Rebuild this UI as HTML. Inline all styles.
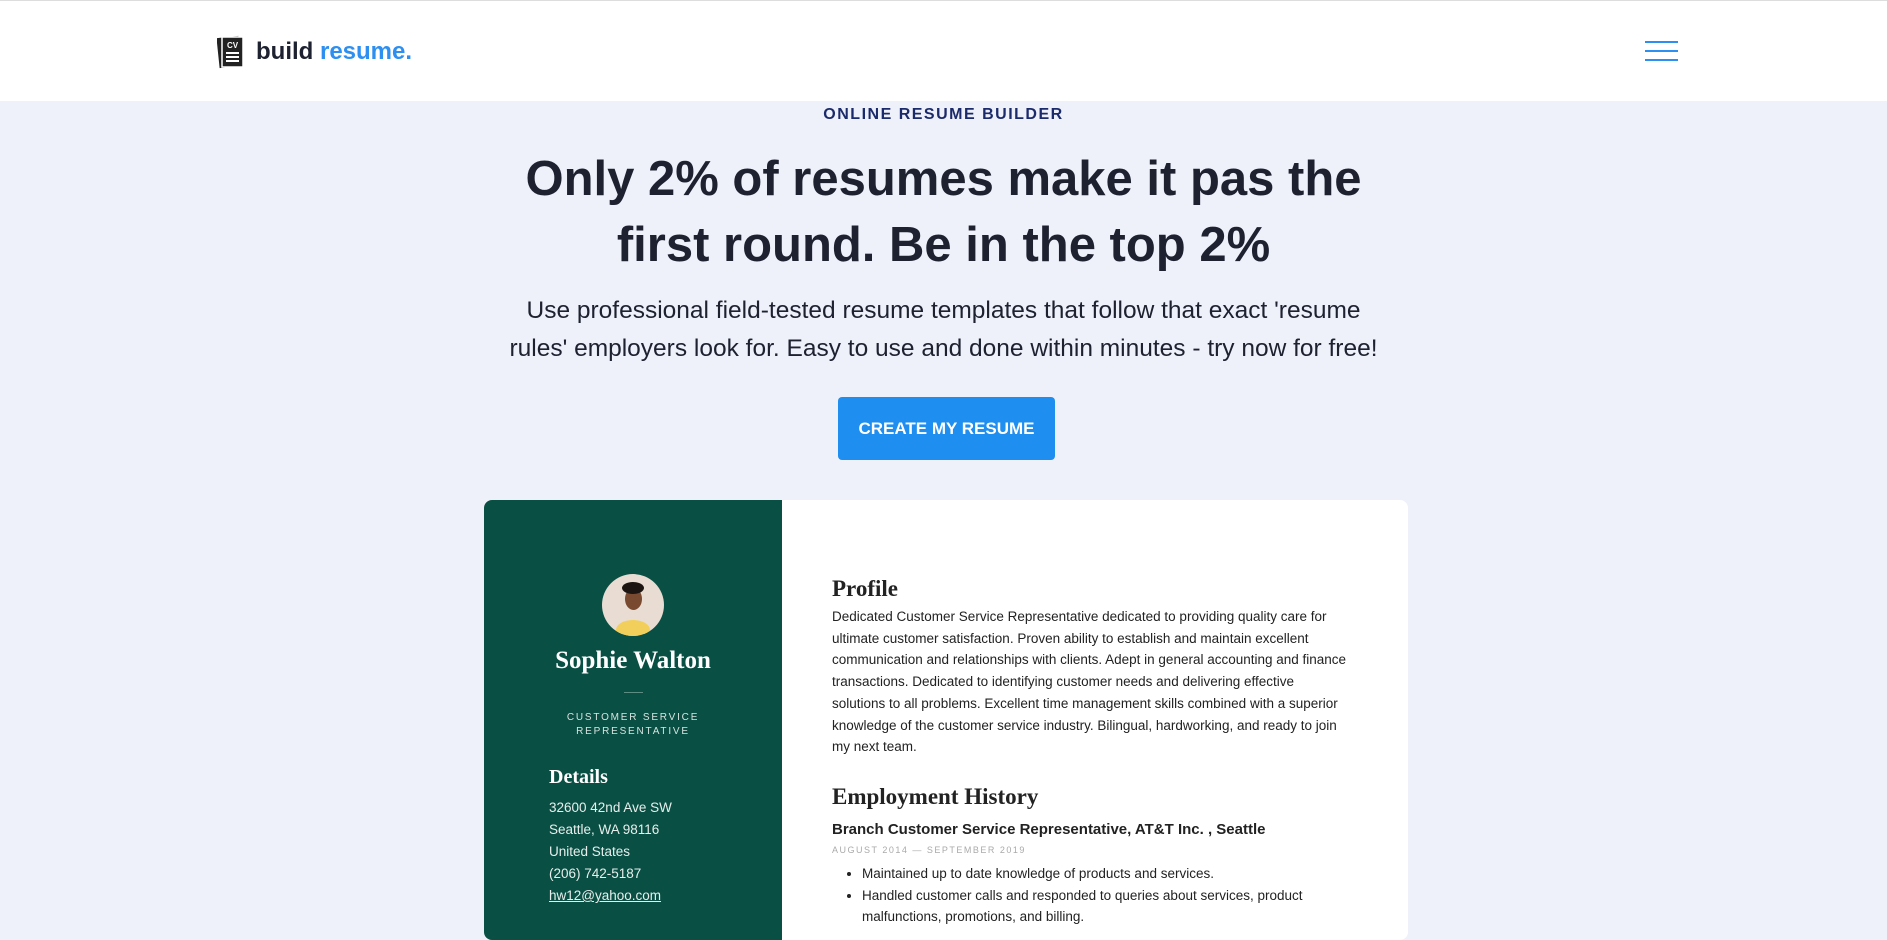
<!DOCTYPE html>
<html><head><meta charset="utf-8"><style>
*{margin:0;padding:0;box-sizing:border-box}
body{width:1887px;height:921px;overflow:hidden;background:#eef1f9;font-family:"Liberation Sans",sans-serif;position:relative}
.hdr{position:absolute;left:0;top:0;width:1887px;height:101px;background:#fff;border-top:1px solid #ddd}
.abs{position:absolute}
.c{position:absolute;left:0;width:1887px;text-align:center}
.serif{font-family:"Liberation Serif",serif}
</style></head><body>
<div class="hdr">
 <svg class="abs" style="left:217px;top:34px" width="28" height="34" viewBox="0 0 28 34">
  <rect x="1" y="2" width="22" height="30" fill="#222" transform="rotate(-6 12 17)"/>
  <rect x="5" y="2" width="21" height="30" fill="#222" stroke="#fff" stroke-width="1.5"/>
  <text x="15.5" y="13" font-size="8" font-family="Liberation Sans" font-weight="bold" fill="#fff" text-anchor="middle">CV</text>
  <rect x="9" y="17" width="13" height="2" fill="#fff"/><rect x="9" y="21" width="13" height="2" fill="#fff"/><rect x="9" y="25" width="13" height="2" fill="#fff"/>
 </svg>
 <div class="abs" style="left:256px;top:37px;font-size:24px;font-weight:bold;color:#1d2130">build <span style="color:#2d8ff0">resume.</span></div>
 <div class="abs" style="left:1645px;top:40px;width:33px;height:2px;background:#2d8ff0"></div>
 <div class="abs" style="left:1645px;top:49px;width:33px;height:2px;background:#2d8ff0"></div>
 <div class="abs" style="left:1645px;top:58px;width:33px;height:2px;background:#2d8ff0"></div>
</div>
<div class="c" style="top:106px;font-size:16px;font-weight:bold;letter-spacing:1.5px;color:#1b2a6b">ONLINE RESUME BUILDER</div>
<div class="c" style="top:146px;font-size:49px;font-weight:bold;line-height:66px;color:#1d2130">Only 2% of resumes make it pas the<br>first round. Be in the top 2%</div>
<div class="c" style="top:292px;font-size:24.5px;line-height:38px;color:#1d2130">Use professional field-tested resume templates that follow that exact 'resume<br>rules' employers look for. Easy to use and done within minutes - try now for free!</div>
<div class="abs" style="left:838px;top:397px;width:217px;height:63px;background:#1f8ef1;border-radius:4px;color:#fff;font-weight:bold;font-size:17px;text-align:center;line-height:63px">CREATE MY RESUME</div>
<div class="abs" style="left:484px;top:500px;width:924px;height:440px;background:#fff;border-radius:8px;overflow:hidden">
 <div class="abs" style="left:0;top:0;width:298px;height:440px;background:#0a4f44;color:#fff">
  <div class="abs" style="left:118px;top:74px;width:62px;height:62px;border-radius:50%;background:#e9dcd3;overflow:hidden">
   <div class="abs" style="left:14px;top:46px;width:34px;height:20px;border-radius:50% 50% 0 0;background:#f2cf5a"></div>
   <div class="abs" style="left:23px;top:14px;width:17px;height:22px;border-radius:50%;background:#7a4a30"></div>
   <div class="abs" style="left:20px;top:8px;width:22px;height:12px;border-radius:50%;background:#1b1410"></div>
  </div>
  <div class="abs serif" style="left:0;width:298px;text-align:center;top:147px;font-size:25px;font-weight:bold">Sophie Walton</div>
  <div class="abs" style="left:140px;top:192px;width:19px;height:1px;background:#5c8c82"></div>
  <div class="abs" style="left:0;width:298px;text-align:center;top:211px;font-size:10px;letter-spacing:1.8px;line-height:14px;color:#d6e4e0">CUSTOMER SERVICE<br>REPRESENTATIVE</div>
  <div class="abs serif" style="left:65px;top:266px;font-size:20px;font-weight:bold">Details</div>
  <div class="abs" style="left:65px;top:297px;font-size:13.5px;line-height:22px;color:#e6efec">32600 42nd Ave SW<br>Seattle, WA 98116<br>United States<br>(206) 742-5187<br><u>hw12@yahoo.com</u></div>
 </div>
 <div class="abs" style="left:348px;top:76px;width:515px;color:#222">
  <div class="serif" style="font-size:23px;font-weight:bold;margin-bottom:4px">Profile</div>
  <div style="font-size:13.5px;line-height:21.7px">Dedicated Customer Service Representative dedicated to providing quality care for ultimate customer satisfaction. Proven ability to establish and maintain excellent communication and relationships with clients. Adept in general accounting and finance transactions. Dedicated to identifying customer needs and delivering effective solutions to all problems. Excellent time management skills combined with a superior knowledge of the customer service industry. Bilingual, hardworking, and ready to join my next team.</div>
  <div class="serif" style="font-size:23px;font-weight:bold;margin-top:26px">Employment History</div>
  <div style="font-size:15px;font-weight:bold;margin-top:11px">Branch Customer Service Representative, AT&amp;T Inc. , Seattle</div>
  <div style="font-size:9px;letter-spacing:1.5px;color:#aaa;margin-top:7px">AUGUST 2014 — SEPTEMBER 2019</div>
  <ul style="font-size:13.5px;line-height:21.7px;margin-left:30px;margin-top:8px"><li>Maintained up to date knowledge of products and services.</li><li>Handled customer calls and responded to queries about services, product malfunctions, promotions, and billing.</li></ul>
 </div>
</div>
</body></html>
